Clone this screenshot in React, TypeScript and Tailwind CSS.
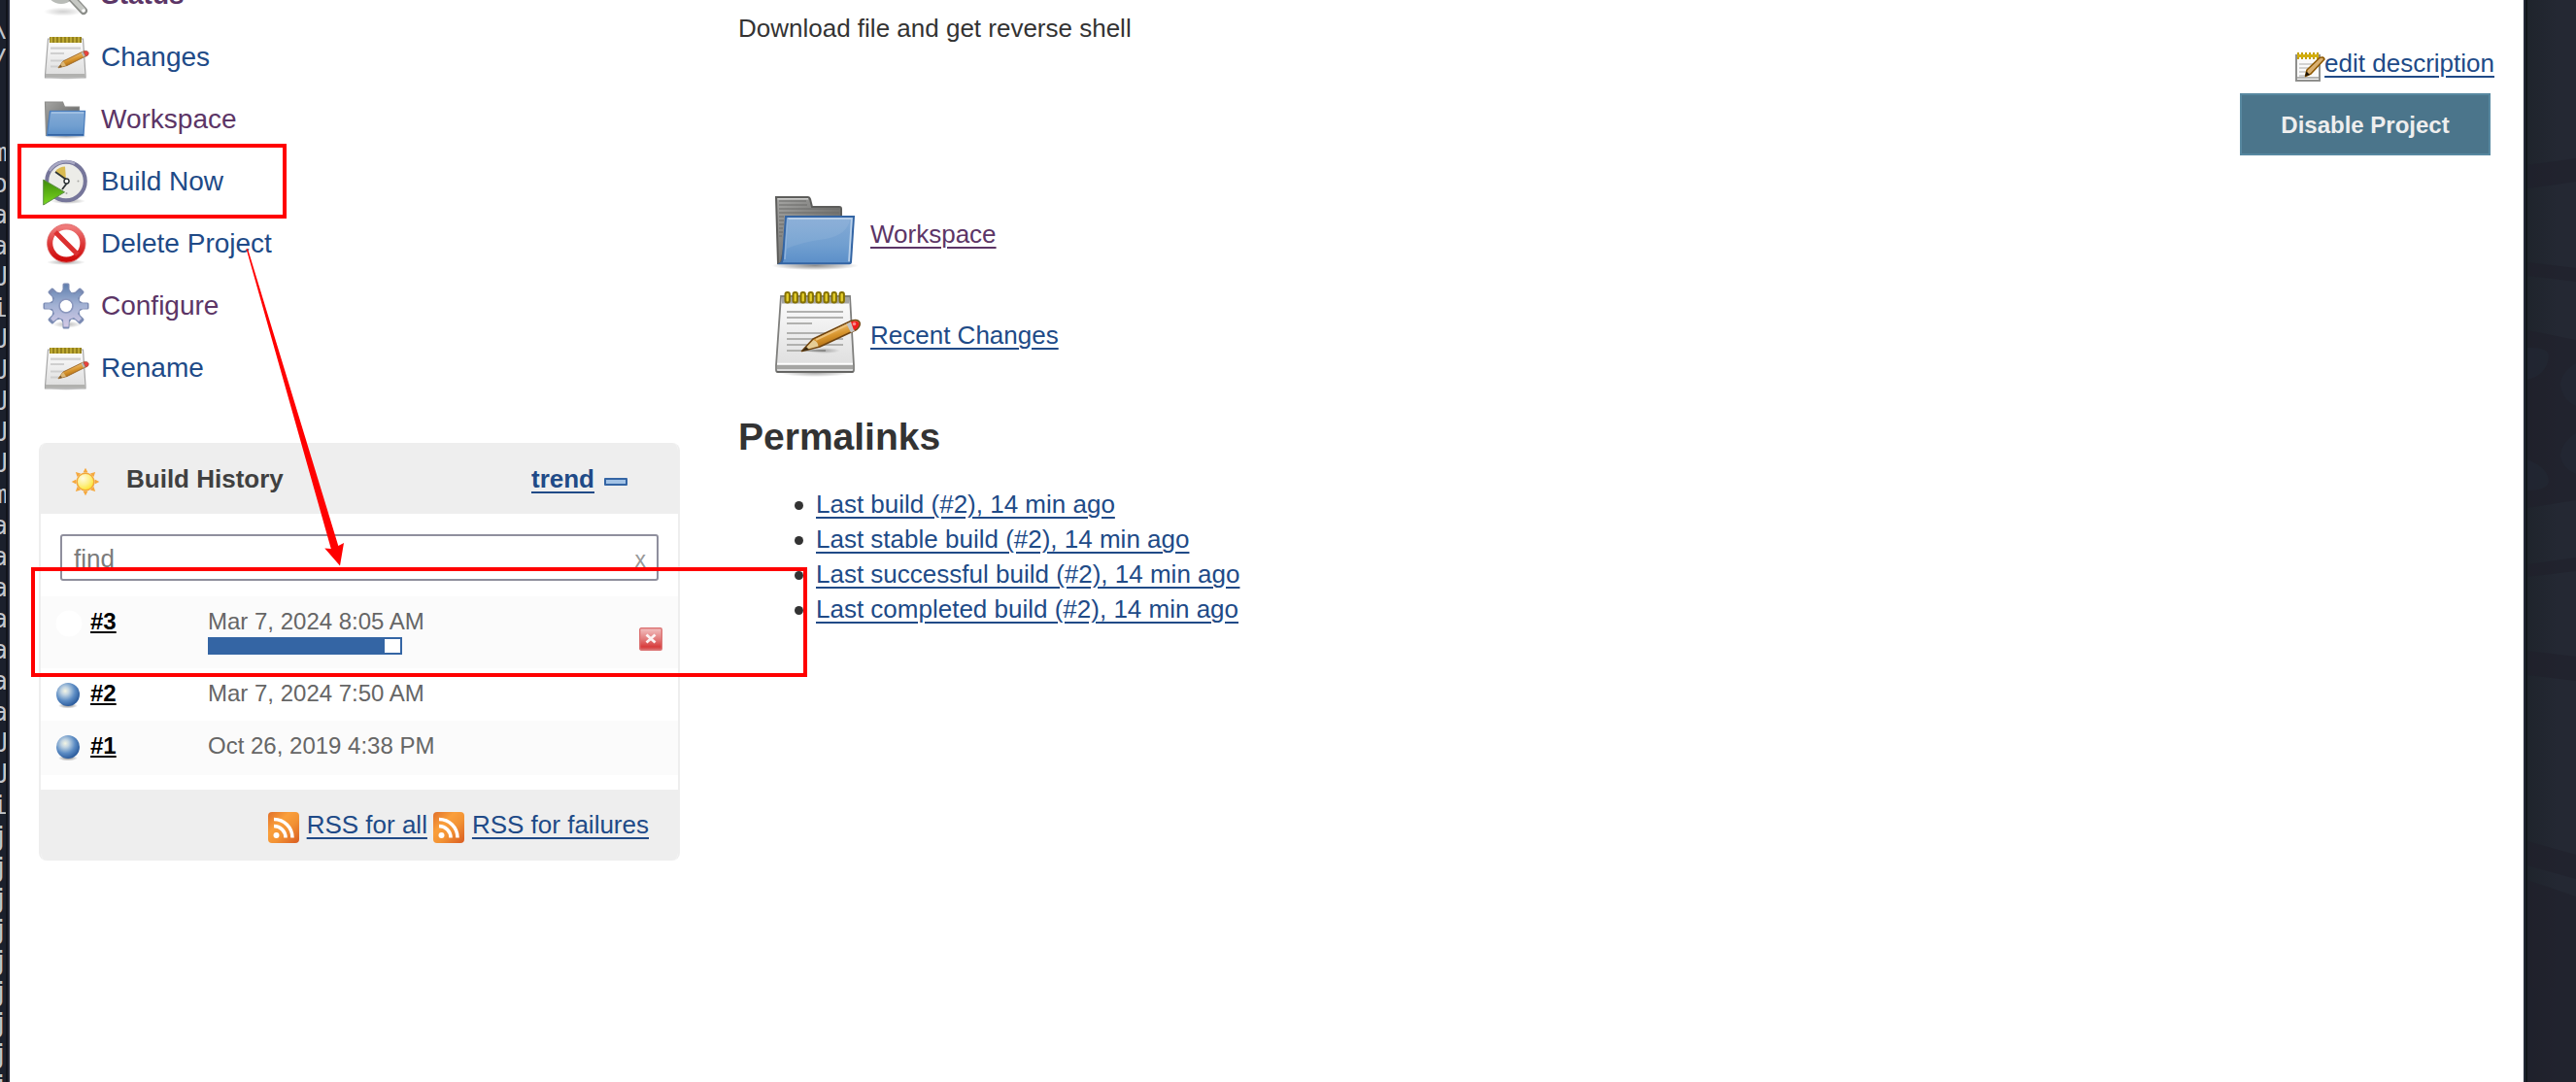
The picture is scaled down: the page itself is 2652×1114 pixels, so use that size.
import React from "react";

type IconProps = { className?: string };

const IconDefs = () => (
  <defs>
    <linearGradient id="paper" x1="0" y1="0" x2="0" y2="1">
      <stop offset="0" stopColor="#fdfdfd" />
      <stop offset="1" stopColor="#dcdcdc" />
    </linearGradient>
    <linearGradient id="wood" x1="0.35" y1="0.2" x2="0.65" y2="0.8">
      <stop offset="0.1" stopColor="#f0c277" />
      <stop offset="0.5" stopColor="#d8962f" />
      <stop offset="1" stopColor="#a8640c" />
    </linearGradient>
    <linearGradient id="folderBack" x1="0" y1="0" x2="1" y2="1">
      <stop offset="0" stopColor="#a6a6a4" />
      <stop offset="0.5" stopColor="#7b7b79" />
      <stop offset="1" stopColor="#5c5c5a" />
    </linearGradient>
    <linearGradient id="folderFront" x1="0" y1="0" x2="0" y2="1">
      <stop offset="0" stopColor="#85abd6" />
      <stop offset="0.6" stopColor="#719fd0" />
      <stop offset="1" stopColor="#5b8fc9" />
    </linearGradient>
    <linearGradient id="stop" x1="0" y1="0" x2="0" y2="1">
      <stop offset="0" stopColor="#ef7b7b" />
      <stop offset="0.5" stopColor="#de3a3a" />
      <stop offset="1" stopColor="#cf0c0c" />
    </linearGradient>
    <linearGradient id="gear" x1="0" y1="0" x2="0" y2="1">
      <stop offset="0" stopColor="#5f7fae" />
      <stop offset="0.5" stopColor="#a3b2d4" />
      <stop offset="1" stopColor="#d3c9e6" />
    </linearGradient>
    <linearGradient id="play" x1="0" y1="0" x2="0" y2="1">
      <stop offset="0" stopColor="#3f8c0a" />
      <stop offset="1" stopColor="#7ad81f" />
    </linearGradient>
    <radialGradient id="ball" cx="0.38" cy="0.35" r="0.65">
      <stop offset="0" stopColor="#f4f5e4" />
      <stop offset="0.25" stopColor="#c3d5e2" />
      <stop offset="0.65" stopColor="#5c8cc4" />
      <stop offset="1" stopColor="#2f5f9f" />
    </radialGradient>
    <radialGradient id="sun" cx="0.35" cy="0.3" r="0.8">
      <stop offset="0" stopColor="#fffbe0" />
      <stop offset="0.5" stopColor="#fdf08a" />
      <stop offset="1" stopColor="#fde21b" />
    </radialGradient>
    <linearGradient id="rss" x1="0" y1="0" x2="1" y2="1">
      <stop offset="0" stopColor="#e0702a" />
      <stop offset="0.35" stopColor="#fa9f3b" />
      <stop offset="0.6" stopColor="#f29234" />
      <stop offset="1" stopColor="#d95c22" />
    </linearGradient>
    <linearGradient id="cancel" x1="0" y1="0" x2="0" y2="1">
      <stop offset="0" stopColor="#f3c3c3" />
      <stop offset="0.5" stopColor="#e27b7b" />
      <stop offset="0.85" stopColor="#d83c3c" />
      <stop offset="1" stopColor="#d96a6a" />
    </linearGradient>
    <radialGradient id="shadow">
      <stop offset="0" stopColor="#000" stopOpacity="0.45" />
      <stop offset="0.6" stopColor="#000" stopOpacity="0.2" />
      <stop offset="1" stopColor="#000" stopOpacity="0" />
    </radialGradient>
  </defs>
);

const Svg = ({ size, children, className = "" }: { size: number; children: React.ReactNode; className?: string }) => (
  <svg width={size} height={size} viewBox={`0 0 ${size} ${size}`} className={`shrink-0 overflow-visible ${className}`}>
    {children}
  </svg>
);

const StatusIcon = () => (
  <Svg size={48}>
    <ellipse cx="21" cy="42" rx="20" ry="4.500" fill="url(#shadow)" opacity="0.4" />
    <circle cx="19" cy="18" r="14" fill="#7ba7d8" stroke="#b9bcb8" strokeWidth="4" />
    <path d="M29 27 L42 41" stroke="#8b8d89" strokeWidth="8" strokeLinecap="round" />
    <path d="M29 27 L41.500 40" stroke="#c6c8c4" strokeWidth="5" strokeLinecap="round" />
    <circle cx="42" cy="41" r="1.800" fill="#fff" />
  </Svg>
);

const NotepadSmall = () => (
  <Svg size={48}>
    <ellipse cx="24" cy="45.500" rx="18" ry="2.500" fill="url(#shadow)" opacity="0.6" />
    <path d="M5.500 6 H41.500 L44 43 V46 H2.500 V43 Z" fill="url(#paper)" stroke="#a5a5a5" strokeWidth="1.200" />
    <path d="M3 42 H43.500 V45.500 H3 Z" fill="#b1b1af" />
    <path d="M7 7 H40" stroke="#94811c" strokeWidth="6" />
    <path d="M8 7 H40" stroke="#bda934" strokeWidth="6" strokeDasharray="2 2" />
    <path d="M8 15.700 H39 M8 21 H22 M8 28.500 H28 M8 34.500 H20" stroke="#cfcfcf" strokeWidth="2.200" />
    <path d="M16 35.800 L21 29 L41.500 19 L44 24 L25 33.500 Z" fill="url(#wood)" stroke="#9a6424" strokeWidth="0.900" />
    <path d="M16 35.800 L21 29 L24 33.500 Z" fill="#dcb878" />
    <path d="M16 35.800 L18.500 32.800 L20 34.800 Z" fill="#7b5a30" />
    <path d="M40.500 19.500 L42.800 24.300" stroke="#b8b8b8" strokeWidth="2" />
    <path d="M42 18.800 Q46.500 17.500 47.200 20.500 Q47.500 23 44.500 24.200 Z" fill="#ee3f3f" stroke="#a8563c" strokeWidth="0.800" />
  </Svg>
);

const FolderSmall = () => (
  <Svg size={48}>
    <ellipse cx="24" cy="42.500" rx="22" ry="2.500" fill="url(#shadow)" opacity="0.7" />
    <path d="M2.500 7 H20.500 L22.500 12 H37.500 V20 H8 L4 41.500 H3.500 Z" fill="url(#folderBack)" stroke="#8d8d8b" strokeWidth="1.200" />
    <path d="M7.500 16.500 H43.500 L42 41.500 H4.500 Z" fill="url(#folderFront)" stroke="#4d7fbd" strokeWidth="1.300" />
    <path d="M9 18 H42.300" stroke="#a9c6e6" strokeWidth="1.500" />
    <path d="M5 40.800 H42" stroke="#3465a4" strokeWidth="1.500" />
  </Svg>
);

const BuildIcon = () => (
  <Svg size={48}>
    <ellipse cx="26" cy="45" rx="18" ry="3" fill="url(#shadow)" opacity="0.7" />
    <circle cx="24" cy="24.500" r="19.800" fill="#ecece8" stroke="#76769a" strokeWidth="4" />
    <path d="M7 14 A20 20 0 0 1 33 6.500" fill="none" stroke="#a9a9c4" strokeWidth="2.500" />
    <path d="M13 14.500 Q17 9.500 23 9.500 L24 23 Z" fill="#d9bb52" />
    <path d="M13 15 L26.500 24.500 L20 33" fill="none" stroke="#2e3436" strokeWidth="1.800" />
    <circle cx="24.500" cy="24.500" r="2.500" fill="#fff" stroke="#2e3436" strokeWidth="1.400" />
    <circle cx="36.500" cy="24.500" r="1" fill="#a9a9a5" />
    <circle cx="24.500" cy="37" r="1" fill="#a9a9a5" />
    <path d="M0.700 23 L22.500 35.800 L0.700 49 Z" fill="url(#play)" stroke="#5f8f4a" strokeWidth="1" />
  </Svg>
);

const ForbiddenIcon = () => (
  <Svg size={48}>
    <ellipse cx="24" cy="44" rx="20" ry="3" fill="url(#shadow)" opacity="0.7" />
    <circle cx="24.300" cy="24.500" r="16.800" fill="#fff" stroke="url(#stop)" strokeWidth="5.500" />
    <path d="M13 13 L36 36" stroke="#dc3030" strokeWidth="5" />
    <circle cx="24.300" cy="24.500" r="19.700" fill="none" stroke="#d85050" strokeWidth="0.800" />
  </Svg>
);

const eighths = [0, 45, 90, 135, 180, 225, 270, 315];

const GearIcon = () => (
  <Svg size={48}>
    <ellipse cx="25" cy="44" rx="15" ry="3.500" fill="url(#shadow)" opacity="0.6" />
    <mask id="gearHole">
      <rect x="-4" y="-4" width="56" height="56" fill="#fff" />
      <circle cx="24" cy="25" r="6.200" fill="#000" />
    </mask>
    <g mask="url(#gearHole)">
      <g fill="#7b8bb3">
        {eighths.map((a) => (
          <path key={a} transform={`rotate(${a} 24 25)`} d="M17.500 13 L20.500 8 L20.500 3 Q20.500 1.500 22 1.500 H26 Q27.500 1.500 27.500 3 L27.500 8 L30.500 13 Z" />
        ))}
        <circle cx="24" cy="25" r="15" />
      </g>
      <path
        d="M24 2.500 C27 2.500 26 6 27 10 Q30 12 33 13 L37 9.500 L40 12.500 L36 17 L38 22 L46 22.500 V27.500 L38.500 28 L36 33 L40 38 L37 41 L32 37 L27 39 L26.500 46.500 H21.500 L21 39 L16 37 L11 41 L8 38 L12 33 L10 28 L2 27.500 V22.500 L10 22 L12 17 L8 12.500 L11 9.500 L16 13 Q19 12 21 10 C22 6 21 2.500 24 2.500 Z"
        fill="url(#gear)"
      />
    </g>
    <circle cx="24" cy="25" r="7" fill="none" stroke="#8b97bd" strokeWidth="1.500" />
  </Svg>
);

const FolderLarge = () => (
  <Svg size={96}>
    <ellipse cx="49" cy="81.500" rx="45" ry="4.500" fill="url(#shadow)" />
    <path d="M9 11 H42 Q43.500 11 44 13 L46 21 H74 Q76 21 76 23 V40 H22 L14 79 H11 Z" fill="url(#folderBack)" stroke="#5d5d5b" strokeWidth="2" />
    <path d="M12 15 H40 M12 19 H41 M12 23 H74 M12 27 H74 M12 31 H17 M12 35 H17 M12 39 H17 M12 43 H16 M12 47 H16 M12 51 H15" stroke="#6a6a68" strokeWidth="1.200" />
    <path d="M10.500 12.800 H42" stroke="#d0d0ce" strokeWidth="1.500" />
    <path d="M19 31 H89 L86 78 Q85.800 79.300 84.500 79.300 H13.500 Q15.500 78 16 74 Z" fill="url(#folderFront)" stroke="#3465a4" strokeWidth="2" />
    <path d="M21 33 H86.800 L84 77.300" fill="none" stroke="#b7cfe9" strokeWidth="1.800" />
    <path d="M21 33 L18 75" fill="none" stroke="#8fb3dc" strokeWidth="1.500" />
    <path d="M22 34 H85 Q82 50 60 54 Q36 57 20 64 Z" fill="#fff" opacity="0.08" />
  </Svg>
);

const rings = [20.7, 28.7, 36.7, 44.7, 52.7, 60.7, 68.7, 76.7];

const NotepadLarge = () => (
  <Svg size={96}>
    <ellipse cx="49" cy="88" rx="36" ry="4" fill="url(#shadow)" opacity="0.7" />
    <path d="M14 9 H85 L89 80 V85 Q89 87 87 87 H11 Q9 87 9 85 V80 Z" fill="url(#paper)" stroke="#7f7f7d" strokeWidth="1.800" />
    <path d="M15 10 H84 V16.500 H15 Z" fill="#a5a5a3" />
    <path d="M10 80 H88 V84 H10 Z" fill="#a5a5a3" />
    <path d="M10 78.500 H88" stroke="#fff" strokeWidth="1.600" />
    <path d="M9.500 86.700 H88.500" stroke="#5f5f5d" strokeWidth="1.500" />
    <path d="M20 25 H78 M20 31 H78 M20 37 H46 M20 47 H78 M20 53 H78 M20 59 H78 M20 65 H60" stroke="#b1b1af" strokeWidth="1.800" />
    {rings.map((x) => (
      <rect key={x} x={x - 2.2} y="5" width="4.400" height="10.500" rx="2" fill="#e6d02c" stroke="#857100" strokeWidth="2" />
    ))}
    <ellipse cx="58" cy="65" rx="17" ry="3" fill="url(#shadow)" opacity="0.6" />
    <path d="M35.500 65.500 L47 53 L86 34.500 Q93 32 95 36 Q96 40 91.500 43.500 L54 61 Z" fill="url(#wood)" stroke="#6f4410" strokeWidth="1.600" strokeLinejoin="round" />
    <path d="M50 53.800 L83 38" stroke="#ecc27c" strokeWidth="2" />
    <path d="M37 64.800 L47.500 54 Q52 55.500 52.500 60.500 Z" fill="#e6cd96" />
    <path d="M35.500 65.500 L40 61 L43 64 Z" fill="#3b2a12" />
    <path d="M81.500 37.500 L86 46.500 L90 44.500 L86 35.300 Z" fill="#c4c4c2" />
    <path d="M86 35.300 Q92.500 33 94.200 36.500 Q95 40 90.500 43.300 L89 44 Z" fill="#f01d1d" />
    <circle cx="89.500" cy="37.500" r="1.800" fill="#f98a8a" />
  </Svg>
);

const EditIcon = () => (
  <svg width="32" height="32" viewBox="0 0 32 32" className="shrink-0 overflow-visible">
    <path d="M3 4 H27 V30 H3 Z" fill="#fafafa" stroke="#8f8f8d" strokeWidth="2" />
    <path d="M4 27 H26" stroke="#b5b5b3" strokeWidth="2" />
    <path d="M6 13 H20 M6 17 H18 M6 21 H14 M6 25 H14" stroke="#c5c5c3" strokeWidth="1.500" />
    <path d="M4 2 H26" stroke="#c4a000" strokeWidth="2" strokeDasharray="2 2" />
    <path d="M4 4.500 H26" stroke="#d3ae0c" strokeWidth="3" />
    <path d="M4 7 H26" stroke="#c4a000" strokeWidth="2" strokeDasharray="2 2" />
    <path d="M12.500 25.500 L14 19 L27 6.500 Q31 5 32 8 L18 23 Z" fill="#d9b071" stroke="#8f5902" strokeWidth="1.600" strokeLinejoin="round" />
    <path d="M12 25.500 L13.500 20.500 L17 24 Z" fill="#1d1408" />
  </svg>
);

const SunIcon = () => (
  <Svg size={28}>
    <g fill="#f5a83c">
      {eighths.map((a) => (
        <path key={a} transform={`rotate(${a} 14 14)`} d="M11.500 4.500 L14 -0.300 L16.500 4.500 Z" />
      ))}
    </g>
    <circle cx="14" cy="14" r="8.800" fill="url(#sun)" stroke="#f3a73a" strokeWidth="1.500" />
  </Svg>
);

const RssIcon = ({ className }: IconProps) => (
  <Svg size={32} className={className}>
    <rect x="0" y="0" width="32" height="32" rx="4" fill="url(#rss)" />
    <circle cx="8.500" cy="24" r="3" fill="#fff" />
    <path d="M6 14.500 A12 12 0 0 1 18 26.500 M6 7.500 A19 19 0 0 1 25 26.500" fill="none" stroke="#fff" strokeWidth="3.600" />
  </Svg>
);

const CancelIcon = () => (
  <Svg size={24}>
    <rect x="0.700" y="0.700" width="22.600" height="22.600" rx="1.500" fill="url(#cancel)" stroke="#dc7474" strokeWidth="1.400" />
    <path d="M7.500 7.500 L16.500 15.500 M16.500 7.500 L7.500 15.500" stroke="#fff" strokeWidth="2.800" opacity="0.9" />
  </Svg>
);

const Ball = ({ blank }: { blank?: boolean }) => (
  <Svg size={26}>
    {blank ? (
      <circle cx="13" cy="14" r="13.500" fill="#fff" />
    ) : (
      <>
        <ellipse cx="13" cy="24.500" rx="10" ry="3" fill="url(#shadow)" />
        <circle cx="13" cy="13" r="12" fill="url(#ball)" />
      </>
    )}
  </Svg>
);

const tasks = [
  { label: "Status", icon: <StatusIcon />, style: "font-bold text-[#5c3566]" },
  { label: "Changes", icon: <NotepadSmall />, style: "text-[#204a87]" },
  { label: "Workspace", icon: <FolderSmall />, style: "text-[#5c3566]" },
  { label: "Build Now", icon: <BuildIcon />, style: "text-[#204a87]" },
  { label: "Delete Project", icon: <ForbiddenIcon />, style: "text-[#204a87]" },
  { label: "Configure", icon: <GearIcon />, style: "text-[#5c3566]" },
  { label: "Rename", icon: <NotepadSmall />, style: "text-[#204a87]" },
];

const terminal = "\\/  moaaUiUUUUUmaaaaaaaUUijjjjjjjjj".split("");

const link = "underline decoration-2 underline-offset-[4px]";

const permalinks = [
  "Last build (#2), 14 min ago",
  "Last stable build (#2), 14 min ago",
  "Last successful build (#2), 14 min ago",
  "Last completed build (#2), 14 min ago",
];

const BuildHistory = () => (
  <section className="mt-[54px] flex h-[430px] w-[660px] flex-col overflow-hidden rounded-lg border-x-2 border-[#eeeeee] bg-white">
    <header className="flex h-[73px] items-center bg-[#eeeeee] pr-[52px] pl-8">
      <div className="mt-[7px]">
        <SunIcon />
      </div>
      <h2 className="ml-7 flex-1 text-[26px] leading-9 font-bold text-[#404040]">Build History</h2>
      <a className={`text-[26px] leading-9 font-bold text-[#204a87] ${link}`}>trend</a>
      <span className="mt-[7px] ml-2.5 h-2 w-6 rounded-[1px] border-2 border-[#3465a4] bg-[#a3c3e6]" />
    </header>
    <div className="mx-5 mt-[21px] flex h-12 shrink-0 items-center justify-between rounded-[3px] border-2 border-[#8f8f9d] bg-white pr-[11px] pl-3">
      <span className="mt-0.5 text-[26px] leading-9 text-[#7b7b7b]">find</span>
      <span className="mt-1 text-[23px] leading-9 text-[#999999]">x</span>
    </div>
    <div className="mt-4 flex h-[74px] shrink-0 bg-[#fbfbfb] pl-4">
      <div className="mt-3.5">
        <Ball blank />
      </div>
      <a className="mt-2 ml-[9px] w-[121px] text-2xl leading-9 font-bold text-black underline decoration-2 underline-offset-2">#3</a>
      <div className="flex-1">
        <div className="mt-2 text-2xl leading-9 text-[#666666]">Mar 7, 2024 8:05 AM</div>
        <div className="-mt-0.5 h-[18px] w-[200px] border-2 border-[#3465a4] bg-white">
          <div className="h-full w-[180px] bg-[#3465a4]" />
        </div>
      </div>
      <div className="mt-8 mr-4">
        <CancelIcon />
      </div>
    </div>
    {[
      { id: "#2", date: "Mar 7, 2024 7:50 AM", box: "h-[54px] bg-white" },
      { id: "#1", date: "Oct 26, 2019 4:38 PM", box: "h-14 bg-[#fbfbfb]" },
    ].map((b) => (
      <div key={b.id} className={`flex shrink-0 pl-4 ${b.box}`}>
        <div className="mt-3.5 -ml-px">
          <Ball />
        </div>
        <a className="mt-2 ml-2.5 w-[121px] text-2xl leading-9 font-bold text-black underline decoration-2 underline-offset-2">{b.id}</a>
        <div className="mt-2 text-2xl leading-9 text-[#666666]">{b.date}</div>
      </div>
    ))}
    <footer className="mt-auto flex h-[73px] items-start justify-end bg-[#eeeeee] pt-[18px] pr-[30px] text-[26px] leading-9 text-[#204a87]">
      <RssIcon className="mt-[5px]" />
      <a className={`ml-2 ${link}`}>RSS for all</a>
      <RssIcon className="mt-[5px] ml-1.5" />
      <a className={`ml-2 ${link}`}>RSS for failures</a>
    </footer>
  </section>
);

export default function App() {
  return (
    <div className="relative flex h-[1114px] w-[2652px] overflow-hidden bg-white font-['Liberation_Sans',Arial,sans-serif] text-[#333333]">
      <svg width="0" height="0" className="absolute">
        <IconDefs />
      </svg>

      <aside className="flex w-2.5 shrink-0 bg-[#1b202c]">
        <div className="flex w-1.5 flex-col items-end overflow-hidden pt-[13px] font-['DejaVu_Sans_Mono',monospace] text-[26px] leading-8 text-[#c3c6cc]">
          {terminal.map((c, i) => (
            <span key={i} className="-mr-0.5 h-8 shrink-0 whitespace-pre">
              {c}
            </span>
          ))}
        </div>
        <div className="w-0.5 bg-[#10131a]" />
        <div className="w-0.5 bg-[#262b3b]" />
      </aside>

      <div className="flex flex-1">
        <div className="w-[690px] shrink-0 pl-[30px]">
          <nav className="-mt-[30px] flex flex-col gap-4 pl-1">
            {tasks.map((t) => (
              <a key={t.label} className={`flex h-12 items-center gap-3 text-[28px] leading-[48px] ${t.style}`}>
                {t.icon}
                <span className="pt-px">{t.label}</span>
              </a>
            ))}
          </nav>
          <BuildHistory />
        </div>

        <main className="flex-1 pr-[30px] pl-[60px] text-[26px] leading-9">
          <div className="flex h-48 justify-between">
            <p className="pt-[11px]">Download file and get reverse shell</p>
            <div className="flex flex-col items-end pt-[47px]">
              <a className="flex h-9 text-[#204a87]">
                <span className="mt-1.5">
                  <EditIcon />
                </span>
                <span className={link}>edit description</span>
              </a>
              <button className="mt-[13px] mr-1 h-16 w-[258px] border-2 border-[#5788a0] bg-[#4b758b] pt-0.5 text-2xl font-bold text-[#eeeeee]">
                Disable Project
              </button>
            </div>
          </div>

          <div className="flex flex-col gap-2 pl-[30px]">
            <a className="flex items-center gap-2.5 text-[#5c3566]">
              <FolderLarge />
              <span className={`mt-0.5 ${link}`}>Workspace</span>
            </a>
            <a className="flex items-center gap-2.5 text-[#204a87]">
              <NotepadLarge />
              <span className={`mt-0.5 ${link}`}>Recent Changes</span>
            </a>
          </div>

          <h2 className="mt-[34px] text-[39px] leading-[48px] font-bold">Permalinks</h2>
          <ul className="mt-[27px] pl-[58px]">
            {permalinks.map((p) => (
              <li key={p} className="flex items-center gap-[13px]">
                <span className="mt-0.5 h-[9px] w-[9px] rounded-full bg-[#333333]" />
                <a className={`text-[#204a87] ${link}`}>{p}</a>
              </li>
            ))}
          </ul>
        </main>
      </div>

      <aside className="flex w-[54px] shrink-0">
        <div className="w-0.5 bg-[#232937]" />
        <div className="w-0.5 bg-[#10161a]" />
        <svg width="50" height="1114" viewBox="0 0 50 1114">
          <defs>
            <linearGradient id="edge" x1="0" y1="0" x2="1" y2="0">
              <stop offset="0" stopColor="#1f242c" />
              <stop offset="0.6" stopColor="#242833" />
              <stop offset="1" stopColor="#242833" />
            </linearGradient>
          </defs>
          <rect width="50" height="1114" fill="url(#edge)" />
          <g fill="#20202b" opacity="0.6">
            <path d="M0 170 L50 163 V187 L0 194 Z" />
            <path d="M0 270 L50 276 V290 L0 284 Z" />
            <path d="M0 340 L50 350 V515 L0 523 Z" />
            <path d="M0 581 L50 574 V588 L0 594 Z" />
            <path d="M0 670 L50 676 V701 L0 695 Z" />
            <path d="M0 866 L50 880 V905 L0 891 Z" />
            <path d="M0 906 L50 923 V1114 H0 Z" />
          </g>
          <g fill="#232935" opacity="0.6">
            <path d="M0 358 Q22 357 22 367 Q20 386 0 391 Z" />
            <path d="M0 473 Q22 482 22 496 Q20 505 0 505 Z" />
            <path d="M50 374 Q34 384 34 396 Q36 412 50 418 Z" />
            <path d="M50 446 Q34 456 34 470 Q36 482 50 488 Z" />
          </g>
        </svg>
      </aside>

      {/* Annotations drawn over the page */}
      <div className="pointer-events-none absolute top-[148px] left-[18px] h-[77px] w-[277px] border-4 border-[#ff0000]" />
      <div className="pointer-events-none absolute top-[584px] left-8 h-[113px] w-[799px] border-4 border-[#ff0000]" />
      <svg className="pointer-events-none absolute top-0 left-0" width="400" height="600" viewBox="0 0 400 600">
        <path d="M253.500 256 L255 256 L348.300 562 L354 559 L350 582.500 L334.300 564.500 L340.800 565 Z" fill="#ff0000" />
      </svg>
    </div>
  );
}
